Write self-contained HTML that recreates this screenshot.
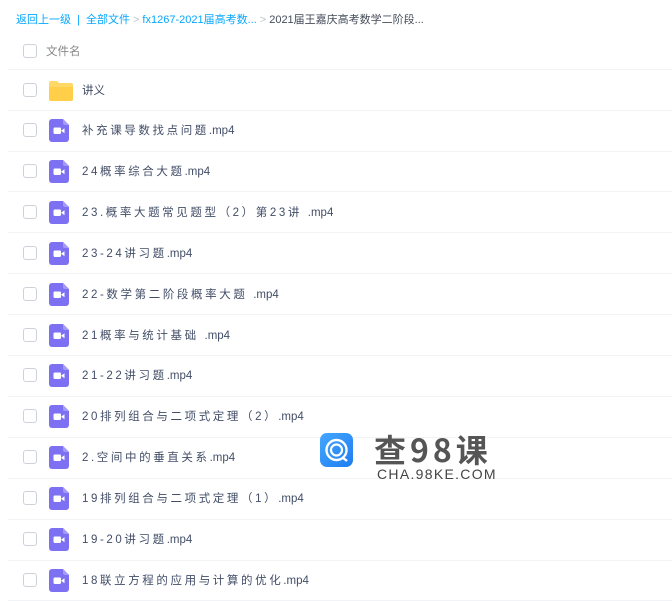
<!DOCTYPE html>
<html><head><meta charset="utf-8"><style>
body{margin:0;width:672px;height:600px;overflow:hidden;background:#fff;font-family:"Liberation Sans","Noto Sans CJK SC",sans-serif;position:relative}
.bc{position:absolute;left:16px;top:11px;font-size:11px;color:#06a7ff;white-space:nowrap}
.bc .g{color:#c0c4cc;margin:0 3px}
.bc .d{color:#454d5a}
.row{position:absolute;left:8px;right:0;height:41px;border-bottom:1px solid #f2f3f6}
.cb{position:absolute;left:15px;top:50%;margin-top:-7px;width:12px;height:12px;border:1px solid #cdd1da;border-radius:3px;background:#fff}
.t{position:absolute;left:74px;top:50%;transform:translateY(-50%);font-size:11.5px;color:#424e67;letter-spacing:2.6px;white-space:nowrap}
.t span{letter-spacing:0}
.ic{position:absolute;left:41px;top:50%;margin-top:-11px}
</style></head><body>
<div class="bc">返回上一级 <span class="g" style="color:#06a7ff">|</span> 全部文件<span class="g">&gt;</span>fx1267-2021届高考数...<span class="g">&gt;</span><span class="d">2021届王嘉庆高考数学二阶段...</span></div>
<div class="row" style="top:32px;height:37px"><div class="cb"></div><div class="t" style="left:38px;color:#888;letter-spacing:0">文件名</div></div>
<div class="row" style="top:69px"><div class="cb"></div>
<svg class="ic" width="24" height="22" viewBox="0 0 24 22" style="margin-top:-10px"><path d="M0 3a2 2 0 0 1 2-2h6l2 2h12a2 2 0 0 1 2 2v14a2 2 0 0 1-2 2H2a2 2 0 0 1-2-2z" fill="#ffd866"/><path d="M0 7h24v12a2 2 0 0 1-2 2H2a2 2 0 0 1-2-2z" fill="#ffcf4a"/></svg>
<div class="t" style="letter-spacing:0">讲义</div></div>
<div id="rows"></div>
<script>
var n=["补充课导数找点问题","24概率综合大题","23.概率大题常见题型（2）第23讲 ","23-24讲习题","22-数学第二阶段概率大题 ","21概率与统计基础 ","21-22讲习题","20排列组合与二项式定理（2）","2.空间中的垂直关系","19排列组合与二项式定理（1）","19-20讲习题","18联立方程的应用与计算的优化"];
var h="";for(var i=0;i<n.length;i++){h+='<div class="row" style="top:'+(109.5+i*40.9)+'px"><div class="cb"></div><svg class="ic" width="20" height="23" viewBox="0 0 20 23"><path d="M3 0h11l6 6v14a3 3 0 0 1-3 3H3a3 3 0 0 1-3-3V3a3 3 0 0 1 3-3z" fill="#7d70f2"/><path d="M14 0l6 6h-4a2 2 0 0 1-2-2z" fill="#a49bf7"/><rect x="4.5" y="8.5" width="7.5" height="6.5" rx="1.2" fill="#fff"/><path d="M12 11.7l3.5-2.5v5z" fill="#fff"/></svg><div class="t">'+n[i]+'<span>.mp4</span></div></div>';}
document.getElementById("rows").innerHTML=h;
</script>
<div style="position:absolute;left:320px;top:433px;width:33px;height:34px;border-radius:7px;background:linear-gradient(135deg,#44a7ff,#1f7df0)">
<svg width="33" height="34" viewBox="0 0 33 34"><circle cx="16.5" cy="17" r="10" fill="none" stroke="#fff" stroke-width="2.4"/><circle cx="16.5" cy="17" r="5.5" fill="none" stroke="#fff" stroke-width="2.2"/><path d="M22 24l5 4" stroke="#fff" stroke-width="2.4"/></svg></div>
<div style="position:absolute;left:374px;top:426px;font-size:32px;color:#555;font-family:'Noto Sans CJK SC','Liberation Sans',sans-serif;font-weight:bold;letter-spacing:4px;white-space:nowrap">查98课</div>
<div style="position:absolute;left:377px;top:466px;font-size:14px;color:#444;letter-spacing:1.3px;white-space:nowrap">CHA.98KE.COM</div>
</body></html>
